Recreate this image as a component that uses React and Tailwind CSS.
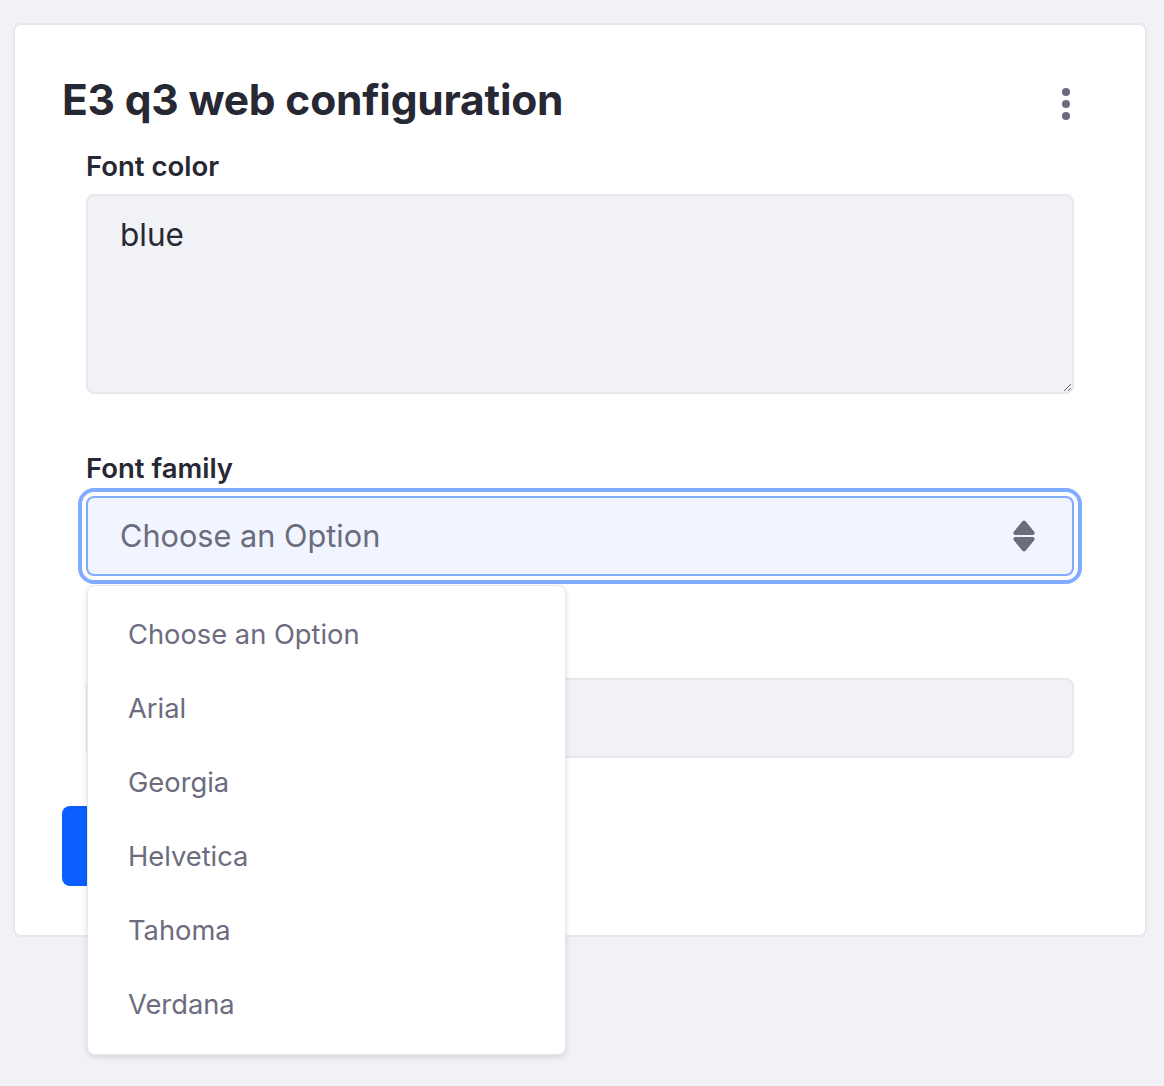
import React, { useState } from "react";

const options = ["Choose an Option", "Arial", "Georgia", "Helvetica", "Tahoma", "Verdana"];

const KebabIcon = () => (
  <svg width="10" height="34" viewBox="0 0 10 34" fill="#6b6c7e">
    <circle cx="5" cy="5" r="4" />
    <circle cx="5" cy="17" r="4" />
    <circle cx="5" cy="29" r="4" />
  </svg>
);

const CaretDouble = () => (
  <svg width="24" height="34" viewBox="0 0 24 34" fill="#6b6c7e">
    <path d="M10.4 2.2a2 2 0 0 1 3.2 0l8.6 10.6c1 1.3.1 3.2-1.6 3.2H3.4c-1.7 0-2.6-1.9-1.6-3.2z" />
    <path d="M10.4 31.8a2 2 0 0 0 3.2 0l8.6-10.6c1-1.3.1-3.2-1.6-3.2H3.4c-1.7 0-2.6 1.9-1.6 3.2z" />
  </svg>
);

export default function App() {
  const [open] = useState(true);
  const [fontColor, setFontColor] = useState("blue");

  return (
    <div
      className="min-h-[1086px] bg-[#f1f2f5] pt-[23px] pl-[13px]"
      style={{ fontFamily: "Inter, 'Noto Sans', sans-serif" }}
    >
      <div className="w-[1134px] bg-white border-2 border-[#e7e7ed] rounded-[8px] px-[47px] pt-[49px] pb-[49px]">
        {/* Header */}
        <div className="flex items-center justify-between">
          <h1 className="text-[42.5px] leading-[52px] font-bold text-[#272833] tracking-[-0.2px]">
            E3 q3 web configuration
          </h1>
          <button type="button" aria-label="Options" className="mr-[27px] mt-[8px]">
            <KebabIcon />
          </button>
        </div>

        <form className="px-[24px]">
          {/* Font color */}
          <label className="block mt-[24px] text-[27.5px] leading-[32px] font-semibold text-[#272833]">
            Font color
          </label>
          <textarea
            className="block mt-[12px] w-full h-[200px] bg-[#f1f2f5] border-2 border-[#e7e7ed] rounded-[8px] px-[32px] pt-[15px] text-[31.5px] leading-[48px] text-[#272833] outline-none resize-y"
            value={fontColor}
            onChange={(e) => setFontColor(e.target.value)}
          />

          {/* Font family */}
          <label className="block mt-[58px] text-[27.5px] leading-[32px] font-semibold text-[#272833]">
            Font family
          </label>
          <div className="relative mt-[12px]">
            <div className="relative h-[80px] bg-[#f0f5ff] border-2 border-[#80acff] rounded-[8px] flex items-center px-[32px] shadow-[0_0_0_4px_#fff,0_0_0_8px_#80acff]">
              <span className="text-[30.7px] text-[#6b6c7e]">Choose an Option</span>
              <span className="absolute right-[36px] top-[21px]">
                <CaretDouble />
              </span>
            </div>

            {open && (
              <ul className="absolute z-10 left-[1px] top-[89px] w-[479px] bg-white border border-[#e7e7ed] rounded-[8px] shadow-[0_2px_6px_rgba(0,0,0,0.12)] py-[12px]">
                {options.map((opt) => (
                  <li
                    key={opt}
                    className="h-[74px] flex items-center pl-[40px] text-[27.3px] text-[#6b6c7e]"
                  >
                    {opt}
                  </li>
                ))}
              </ul>
            )}
          </div>

          {/* Third field, label covered by the open menu */}
          <div className="mt-[58px] h-[32px]" />
          <input
            type="text"
            aria-label="Font size"
            className="block mt-[12px] w-full h-[80px] bg-[#f1f2f5] border-2 border-[#e7e7ed] rounded-[8px] px-[32px] text-[32px] text-[#272833] outline-none"
          />
        </form>

        <button
          type="button"
          aria-label="Save"
          className="block mt-[48px] h-[80px] w-[160px] bg-[#0b5fff] rounded-[8px]"
        />
      </div>
    </div>
  );
}
